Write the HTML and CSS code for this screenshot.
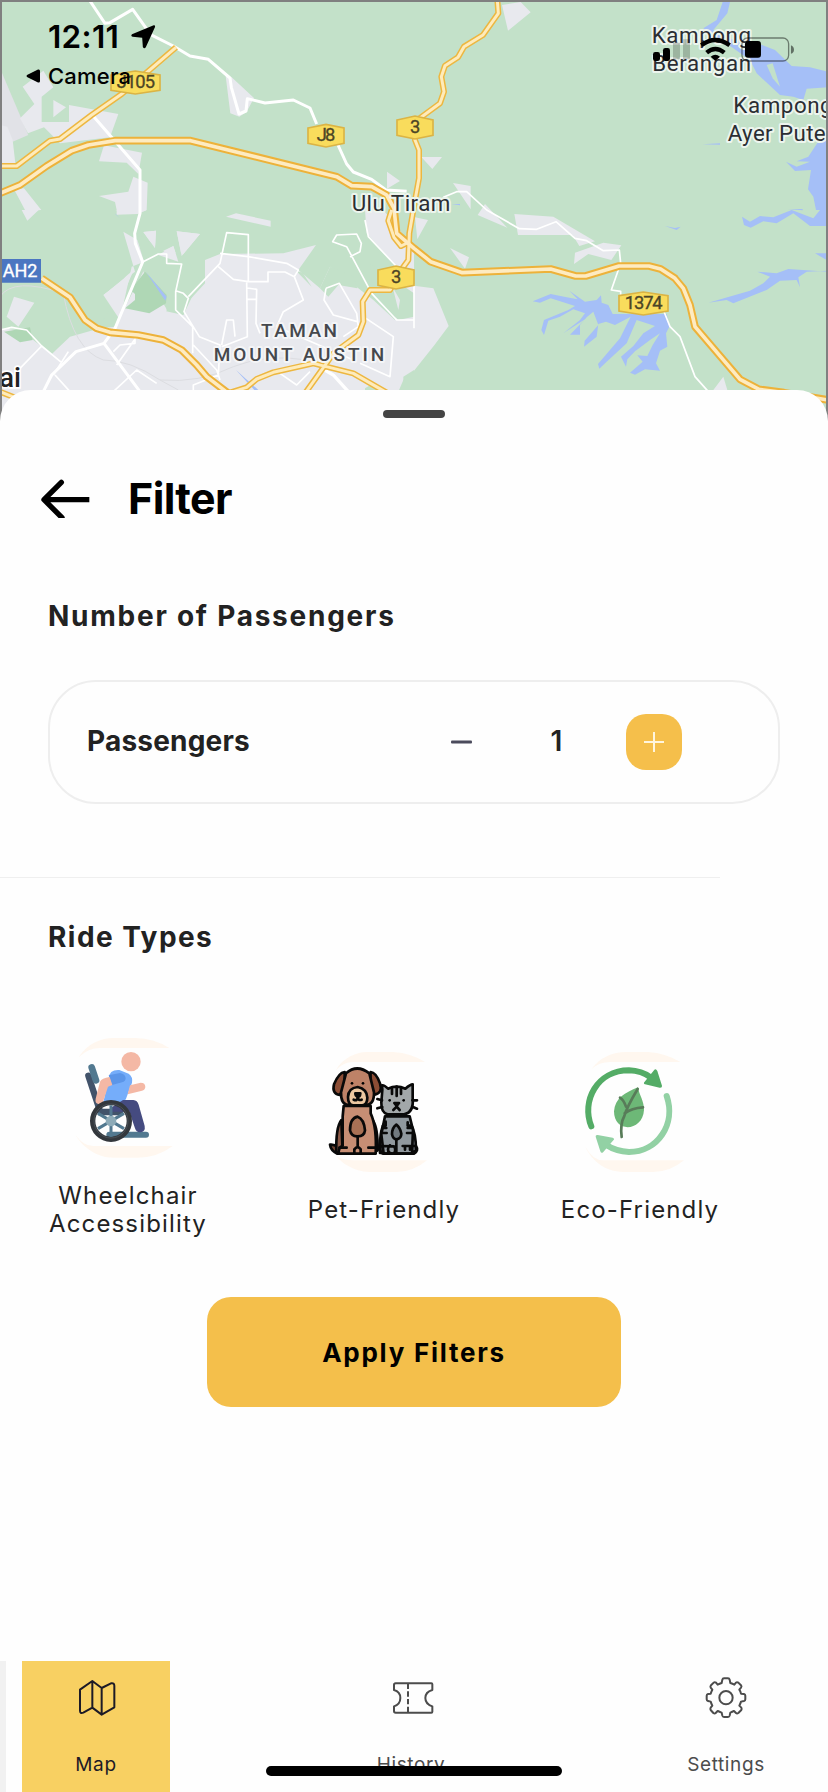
FILE: index.html
```html
<!DOCTYPE html>
<html lang="en">
<head>
<meta charset="utf-8">
<title>Filter</title>
<link rel="stylesheet" href="styles.css">
</head>
<body>
<div class="phone">
  <header class="map">
    <svg class="map-canvas" viewBox="0 0 2484 1290" width="828" height="430">
      <rect width="2484" height="1290" fill="#c3e1c9"/>
      <!-- built-up areas -->
      <g fill="#e8e9ee">
        <path fill="#e1e2e7" d="M0 205L85 405L38 425L0 375Z"/>
        <path d="M0 375L22 380L38 420L46 490L0 498Z"/>
        <path d="M68 260L130 212L160 262L125 290V366H207V315L355 342L330 412L180 430L132 382L84 400L60 355L103 312Z"/>
        <path d="M160 300L198 322L160 352ZM312 436L426 458L415 522L380 488L297 484ZM400 530L443 548L440 630H350L345 606L297 588L385 575ZM42 568L72 565L124 630H75Z"/>
        <path d="M677 228L695 232L762 294L740 335L718 350L691 340ZM1161 515L1200 543L1161 566Z"/>
        <path d="M1506 15L1562 6L1592 37L1524 92ZM1264 471H1326L1297 507ZM1359 549L1412 558V628ZM1433 645L1455 612L1522 683ZM1543 642L1660 650L1785 724L1738 738L1718 705H1554ZM1722 792L1725 758L1810 728L1864 736L1834 780L1765 762ZM1350 744L1407 772L1395 806ZM1245 652L1284 660L1252 718ZM1242 857L1300 865L1346 978L1304 1034L1242 1112Z"/>
        <path d="M65 630L120 632L82 662ZM350 630L440 630L412 642L350 644ZM678 650L708 640L812 662V680ZM370 695L412 720L432 785L410 775ZM430 696L468 692L465 745ZM530 694L600 702L545 768ZM470 762L520 738L535 785Z"/>
        <path d="M345 630L412 785L360 905L310 885L372 835L410 785L440 795L345 980L300 985L210 1010L155 1062L125 1035L60 990L0 985V1290H1210V1130L1242 1110V745L1150 630H1095L1100 700L1190 800L1205 880L1185 960L1120 900L1075 865L990 800L960 865L895 810L948 735L850 760L660 762L615 780V850L555 915L550 945L520 930L500 935L495 850L440 795Z"/>
        <path d="M42 890L103 908L55 980L20 950Z"/>
      </g>
      <path fill="#c3e1c9" d="M0 630H60L120 632H412V710L425 790L310 885L340 910L300 975L205 1010L155 1062L60 990L0 985ZM412 700L500 760H545L600 840L550 945L505 935L430 815ZM888 812L908 818L935 860ZM960 865L990 800L1060 830L1072 865L1015 855L985 890ZM1110 790L1242 880V950L1195 960L1120 885ZM1095 1165L1120 1150L1155 1180H1095ZM1210 1140L1242 1115V1175H1195Z"/>
      <path fill="#e8e9ee" d="M42 890L103 908L55 980L20 950ZM370 695L412 720L432 785L395 800L360 960L310 885L405 815ZM430 696L468 692L465 745ZM530 694L600 702L545 768ZM475 765L520 738L535 785ZM1178 862L1200 900L1195 930ZM2140 1170L2170 1130L2182 1170ZM65 630H116L82 662ZM350 630H440L412 642L350 644Z"/>
      <path fill="#afd7b5" d="M435 815L500 885L498 910L448 940L375 925L405 900V882L392 870ZM12 995L90 982L98 1020L60 1027Z"/>
      <!-- water -->
      <g fill="#a5bff7">
        <path d="M2168 6H2190L2182 40L2140 90L2180 115L2260 125L2325 150L2375 198L2430 202L2484 215V262L2420 266L2410 300L2380 290L2340 285L2270 220L2250 180L2200 145L2110 85L2150 60Z"/>
        <path d="M2484 380V630H2448L2440 590L2424 568L2433 510L2385 513L2358 485L2390 500L2430 485L2390 484L2425 470Z"/>
        <path d="M2484 600V678H2430L2380 640L2330 670L2290 664L2252 683L2232 675L2226 650L2250 665L2280 648L2320 652L2375 630L2440 655ZM2484 812L2420 815L2395 832L2400 862L2390 840L2340 842L2300 870L2200 910L2180 900L2125 908L2250 872L2290 850L2310 830L2272 815L2330 820L2365 807L2484 815ZM2445 760H2484V782ZM2108 433L2160 430V434ZM1995 678L2025 684L2042 680L2030 690ZM1355 612H1380V616ZM2364 627H2408V631Z"/>
        <path d="M1598 904L1652 882L1700 892L1733 898L1708 872L1755 905L1790 900L1803 886L1805 908L1825 915L1838 942H2000L2008 980L1998 1000L2002 1040L1980 1052L1968 1090L1980 1112L1935 1108L1905 1124L1890 1118L1928 1085L1912 1066L1942 1068L1958 1035L1980 1000L1950 1020L1905 1054L1882 1078L1878 1100L1863 1070L1900 1038L1930 1000L1965 978L1910 960L1880 1030L1820 1085L1798 1106L1794 1092L1860 1015L1892 950L1845 975L1818 965L1795 972L1790 1010L1752 1040L1754 1022L1795 975L1780 935L1760 952L1740 975V1004H1710L1755 958L1690 1000L1740 960L1755 940L1720 928L1680 950L1645 962L1632 1005L1624 990L1632 960L1705 930L1725 918L1652 895L1620 908Z"/>
        <path d="M438 816L500 890L496 902ZM345 640L360 655L348 644ZM708 1110L775 1170L765 1172Z"/>
      </g>
      <path fill="#c3e1c9" d="M2318 190L2340 260L2318 235L2300 195Z"/>
      <!-- minor roads -->
      <g fill="none" stroke="#dcdde1" stroke-width="3">
        <path d="M0 890Q40 830 190 880Q220 1050 310 1080Q390 1080 480 1140Q600 1150 700 1100Q800 1060 920 1080M480 1140L535 1170"/>
      </g>
      <g fill="none" stroke="#fff" stroke-linejoin="round" stroke-width="9">
        <path d="M268 0L315 70L330 68L398 28L452 104L520 138L570 168L625 178L690 234L694 262L717 342L738 333L742 296L795 309L880 300L930 324L950 372M1014 435L1040 492L1060 516L1115 538L1158 570L1220 574M277 345L420 510V640L404 700L406 730L428 786L345 985L312 1030L228 1055L155 1125L130 1175M312 1030L420 1175"/>
      </g>
      <g fill="none" stroke="#fff" stroke-linejoin="round" stroke-width="5">
        <path d="M428 786L475 762H500V790L545 792L527 875V930L578 980V1060M527 872L550 880L565 895L552 935L598 1010L660 1035L655 1125L580 1155V1175M565 890L660 790L680 698L745 704V845L700 838L655 800M660 760L745 770L860 790L895 810L883 830L910 900L850 935L830 980L1060 1080M745 845H804V816H855L883 830M740 845L742 1010L665 1040M742 864L770 868L768 970L780 1000M740 898H770M665 1035L680 960H700L705 1010M978 865L1018 850L1070 940L1075 980L1030 1010M978 865L972 900L1000 945L1072 965M1095 660L1105 710L1242 855V985M1040 740L1115 880L1190 960H1242M1040 740L998 725L1010 705L1070 702L1084 730L1080 755L1050 770M0 990L35 982L80 990L125 1038L185 1088M125 1038L60 1105M205 1055L160 1125M165 1125L210 1175M340 1055L360 1035L405 1030V1015M340 1175L410 1110L470 1150M410 1010L350 1095M580 1035L650 1110L660 1140M1090 950L1180 1010L1170 1130L1080 1090M840 1120L890 1155L930 1115M1380 1175M1330 592L1370 575H1400L1460 630L1558 686L1610 688L1668 665L1725 715L1760 722L1810 752L1858 750L1862 790L1834 870L1862 874V890M1990 930L2010 980L2040 1010L2085 1130L2125 1175"/>
      </g>
      <path d="M965 1105L1000 1125L1045 1175" fill="none" stroke="#fff" stroke-width="10"/>
      <!-- highways: casing, then fill -->
      <defs>
        <path id="minor-highways" d="M0 498H50L150 422L180 417L275 345L365 282L528 142M1492 0L1495 40L1449 105L1392 140L1374 172L1335 197L1324 230L1332 275L1320 310L1245 365V420L1257 450V535L1247 590L1228 700L1225 780L1205 808L1170 870H1110L1088 905L1090 965L1075 1005L1000 1060L965 1110L915 1180M1175 630L1165 662L1182 712L1203 738L1230 725M690 1178L740 1162L770 1137L820 1117L940 1090L1060 1120L1160 1178M0 1175L50 1195"/>
        <path id="major-highways" d="M0 580L60 555L140 498L215 452L265 435L345 422H572L1010 530L1055 557L1115 560L1160 585L1182 625L1190 700L1242 745L1292 785L1387 818L1652 807L1727 828H1757L1857 798H1947L1982 807L2025 835L2050 865L2070 915L2085 980L2220 1138L2277 1168L2352 1178L2484 1200M125 835L210 892L255 960L290 985L330 997L415 1005L490 1020L545 1050L590 1095L620 1130L685 1180"/>
      </defs>
      <g fill="none" stroke-linejoin="round">
        <use href="#minor-highways" stroke="#edb740" stroke-width="18"/>
        <use href="#major-highways" stroke="#edb23a" stroke-width="23"/>
        <use href="#minor-highways" stroke="#feebbb" stroke-width="9"/>
        <use href="#major-highways" stroke="#feebc1" stroke-width="11"/>
      </g>
      <!-- route shields -->
      <g fill="#f9dc5c" stroke="#dbb445" stroke-width="5">
        <path d="M333 225L406 213L480 225V271L406 282L333 271Z"/>
        <path d="M924 384L978 373L1032 384V430L978 441L924 430Z"/>
        <path d="M1191 360L1245 348L1299 360V406L1245 417L1191 406Z"/>
        <path d="M1134 810L1188 798L1242 810V856L1188 867L1134 856Z"/>
        <path d="M1857 887L1930 876L2004 887V933L1930 945L1857 933Z"/>
      </g>
      <path d="M0 777H123V848H0Z" fill="#4b76c1"/>
      <g class="shield-text">
        <text x="350" y="264" textLength="115">J105</text>
        <text x="950" y="423" textLength="56">J8</text>
        <text x="1230" y="400">3</text>
        <text x="1173" y="850">3</text>
        <text x="1874" y="927" textLength="114">1374</text>
        <text x="8" y="831" textLength="104" class="route-blue">AH2</text>
      </g>
      <!-- place names -->
      <g class="place">
        <text x="1955" y="128" textLength="298">Kampong</text>
        <text x="1957" y="214" textLength="296">Berangan</text>
        <text x="2200" y="338" textLength="298">Kampong</text>
        <text x="2183" y="424" textLength="294">Ayer Pute</text>
        <text x="1055" y="634" textLength="296">Ulu Tiram</text>
      </g>
      <g class="place district">
        <text x="783" y="1010" textLength="228">TAMAN</text>
        <text x="641" y="1082" textLength="512">MOUNT AUSTIN</text>
      </g>
      <text x="-2" y="1161" class="city">ai</text>
      <path d="M3 1290V3H2481V1290" fill="none" stroke="#808080" stroke-width="6"/>
    </svg>
    <div class="status">
      <div class="status-left">
        <div class="clock"><span>12:11</span>
          <svg viewBox="392 70 76 76" width="25" height="25"><path d="M461 74Q466 73 465 79L437 141Q432 147 428 140L426 112L397 109Q390 106 395 101Z"/></svg>
        </div>
        <div class="back-app">
          <svg viewBox="0 0 15 14" width="15" height="14"><path d="M1 6Q0 7 1 8L12 13.400Q14 14 14 12V2Q14 0 12 .6Z"/></svg>
          <span>Camera</span>
        </div>
      </div>
      <svg class="status-icons" viewBox="714 108 430 80" width="143.300" height="26.700">
        <rect x="717" y="156" width="21" height="27" rx="7"/>
        <rect x="747" y="144" width="21" height="39" rx="7"/>
        <path d="M777 128h21v50h-21ZM807 118h21v60h-21Z" opacity=".2"/>
        <g fill="none" stroke="#000" stroke-width="13"><path d="M862 136Q904 104 947 136M878 158Q904 136 931 158"/></g>
        <path d="M890 170Q904 158 918 170L904 183Z"/>
        <rect x="984" y="114" width="140" height="69" rx="17" fill="none" stroke="#000" stroke-opacity=".45" stroke-width="4"/>
        <rect x="993" y="123" width="48" height="50" rx="9"/>
        <path d="M1131 136Q1140 140 1140 149T1131 161Z" opacity=".5"/>
      </svg>
    </div>
  </header>

  <main class="sheet">
    <div class="handle"></div>
    <div class="title-row">
      <svg viewBox="122 115 147 117" width="49" height="39"><path d="M267 177H132M183 125L131 177L185 231" fill="none" stroke="#000" stroke-width="16" stroke-linejoin="round" stroke-linecap="round"/><path d="M267 165h6v24h-6Z" fill="#fff"/></svg>
      <h1>Filter</h1>
    </div>
    <h2 class="heading-passengers">Number of Passengers</h2>
    <section class="passenger-card">
      <span class="passenger-label">Passengers</span>
      <button class="minus" aria-label="Fewer"><svg viewBox="0 0 22 4" width="22" height="4"><rect y=".5" width="21" height="3" rx="1" fill="#4b4b5c"/></svg></button>
      <span class="count">1</span>
      <button class="plus" aria-label="More"><svg viewBox="0 0 20 20" width="20" height="20"><path d="M0 10H20M10 0V20" stroke="#fff5dd" stroke-width="2"/></svg></button>
    </section>
    <hr>
    <h2 class="heading-rides">Ride Types</h2>
    <section class="rides">
      <div class="ride">
        <svg viewBox="84 54 360 360" width="120" height="120">
          <path d="M116 112C142 70 184 54 220 54H285Q345 56 388 84H180Q145 84 116 112ZM106 344Q130 378 160 378H398Q352 413 293 413H220C170 413 127 380 106 344Z" fill="#fff7ef"/>
          <g fill="none" stroke-linecap="round">
            <path d="M208 344H318" stroke="#527990" stroke-width="18"/>
            <path d="M145 167L181 276H240" stroke="#42536a" stroke-width="19"/>
            <path d="M155 142L168 181" stroke="#527990" stroke-width="20"/>
          </g>
          <path d="M206 175Q208 148 238 150L266 161Q279 170 276 188L258 236Q254 248 236 247H190Z" fill="#75adfa"/>
          <path d="M206 166L240 159Q256 162 257 174Q257 184 246 187L216 195Z" fill="#5c96e9"/>
          <path d="M180 185Q185 174 209 171L217 195L204 200L191 240Q188 252 176 252Q164 250 167 236Z" fill="#f4b8a5"/>
          <path d="M270 196L302 188Q316 188 316 201Q315 211 303 213L263 223Z" fill="#f4b8a5"/>
          <circle cx="273" cy="125" r="29" fill="#f4b8a5"/>
          <path d="M213 263L249 240H280Q292 241 296 254L314 318Q317 335 301 337Q289 338 285 325L268 275H213Z" fill="#454b80"/>
          <circle cx="213" cy="303" r="55" fill="none" stroke="#33373c" stroke-width="16"/>
          <circle cx="213" cy="303" r="51" fill="none" stroke="#495057" stroke-width="3"/>
          <g stroke="#527990" stroke-width="9"><path d="M213 256V350M174 280L252 326M174 326L252 280"/></g>
          <circle cx="213" cy="303" r="16" fill="#8eabb8"/>
        </svg>
        <span>Wheelchair<br>Accessibility</span>
      </div>
      <div class="ride">
        <svg viewBox="102 66 360 360" width="120" height="120">
          <path d="M137 122C158 82 202 66 230 66H310Q365 70 405 96H190Q158 96 137 122ZM139 378Q160 391 190 391H411Q370 426 320 426H238C190 424 154 399 139 378Z" fill="#fff7ef"/>
          <g stroke="#090909" stroke-width="8" stroke-linejoin="round" stroke-linecap="round">
            <path d="M120 344Q146 342 153 371H142Q122 362 120 344Z" fill="#704433"/>
            <path d="M154 270Q137 292 139 367L158 371ZM249 272Q264 294 263 361L247 371Z" fill="#8c5947"/>
            <path d="M161 228H242V250Q261 291 257 371H146Q145 351 158 347V259Z" fill="#c78e74"/>
            <path d="M164 126Q146 128 132 163Q125 191 149 195L164 175ZM242 126Q258 127 270 160Q279 189 254 194L240 175Z" fill="#8c4d35"/>
            <path d="M153 187L168 130Q201 101 238 130L252 187Q253 225 227 225H176Q152 224 153 187Z" fill="#be8267"/>
            <path d="M174 201Q175 174 203 171Q231 177 232 203Q232 224 217 226H189Q174 224 174 201Z" fill="#ecc7a1"/>
            <path d="M203 260C187 263 180 281 180 301Q184 320 203 319Q223 319 225 301Q222 267 203 260Z" fill="#a97155"/>
            <path d="M203 320V350M148 353H170M235 353H257M193 369V358Q203 345 212 358V369M191 209Q203 214 203 201Q204 213 215 209" fill="none"/>
            <path d="M196 190H211Q210 202 203 200Q196 198 196 190Z" fill="#111"/>
          </g>
          <circle cx="186" cy="160" r="4"/><circle cx="219" cy="160" r="4"/>
          <g stroke="#090909" stroke-width="8" stroke-linejoin="round" stroke-linecap="round">
            <path d="M283 280Q268 303 270 369H300ZM360 277Q379 309 378 363L350 369Z" fill="#767e87"/>
            <path d="M285 259H359L369 300L366 371H281L274 313Z" fill="#90989e"/>
            <path d="M277 179L276 166Q282 164 294 176Q320 164 346 176Q361 163 368 163V204Q372 248 342 253H293Q273 248 274 217Z" fill="#a2a7a9"/>
            <path d="M319 284Q306 293 306 313Q309 328 320 328Q334 325 334 311Q330 292 319 284Z" fill="#71797f"/>
            <path d="M319 329V365M300 346Q294 350 294 358Q294 370 308 371H372Q387 361 378 348H338M272 348Q268 368 280 371H311Q320 361 312 349ZM287 275V287H279M353 277V287H361M278 294H289M353 294H364M277 309H290M351 309H366M345 348V359M360 348V359M306 177V192M320 170V198M333 177V192M262 207L276 211M262 235L277 231M367 211H381M367 230L381 236M310 240L320 230L329 240" fill="none"/>
            <path d="M313 219H327L320 228Z" fill="#111"/>
          </g>
          <circle cx="299" cy="211" r="4"/><circle cx="341" cy="211" r="4"/>
        </svg>
        <span>Pet-Friendly</span>
      </div>
      <div class="ride">
        <svg viewBox="120 66 360 360" width="120" height="120">
          <path d="M154 118C180 82 218 66 258 66H325Q378 70 421 96H212Q176 96 154 118ZM136 350Q159 391 190 391H432Q390 426 340 426H250C194 424 154 391 136 350Z" fill="#fff7ef"/>
          <g fill="none" stroke-linecap="round" stroke-width="18">
            <path d="M154 289C123 213 171 121 267 121Q305 122 333 143" stroke="#54ac66"/>
            <path d="M380 198C409 282 353 366 267 366Q228 364 199 345" stroke="#92d1a4"/>
          </g>
          <path d="M342 121Q347 114 352 123L366 167Q367 174 359 173L315 163Q309 160 314 155Z" fill="#54ac66"/>
          <path d="M167 320Q166 314 173 315L218 323Q225 326 220 331L190 366Q184 372 181 364Z" fill="#92d1a4"/>
          <path d="M294 172C298 197 312 211 312 240C308 305 222 311 222 244C225 205 255 188 294 172Z" fill="#6db877"/>
          <path d="M293 177Q260 232 253 258Q240 281 245 321M258 230Q251 210 240 203M254 250Q275 234 309 232" stroke="#587c59" stroke-width="8" fill="none" stroke-linecap="round"/>
        </svg>
        <span>Eco-Friendly</span>
      </div>
    </section>
    <button class="apply">Apply Filters</button>
  </main>

  <nav class="tabs">
    <a class="tab tab-map">
      <svg viewBox="234 116 114 114" width="38" height="38"><path d="M240 148L277 122L305 143L333 129Q343 127 343 136V201L305 223L277 202L250 217Q240 221 240 211ZM277 122V202M305 143V223" fill="none" stroke="#1d1a26" stroke-width="6" stroke-linejoin="round"/></svg>
      <span>Map</span>
    </a>
    <a class="tab tab-history">
      <svg viewBox="0 0 126 96" width="42" height="32"><path d="M11 4H118Q121 4 121 7V24Q100 30 100 48T121 73V89Q121 92 118 92H11Q6 92 6 87V73Q25 67 25 48T6 24V9Q6 4 11 4Z" fill="none" stroke="#4c4c4c" stroke-width="6" stroke-linejoin="round"/><path d="M48 5V91" stroke="#4c4c4c" stroke-width="6" stroke-dasharray="16 7"/></svg>
      <span>History</span>
    </a>
    <a class="tab tab-settings">
      <svg viewBox="873 110 126 124" width="42" height="41.300"><g fill="none" stroke="#4c4c4c" stroke-width="6" stroke-linejoin="round"><path d="M925 118Q926 114 930 114H942Q946 114 947 118L949 128Q956 130 961 133L966 127Q969 124 973 127L981 135Q984 138 981 142L976 148Q980 154 981 160L990 161Q994 162 994 166V177Q994 181 990 182L981 184Q979 191 976 196L982 202Q984 206 982 209L973 218Q969 221 966 218L960 212Q955 215 949 217L947 226Q946 230 942 230H930Q926 230 925 226L923 217Q916 215 911 212L905 218Q902 221 898 218L890 209Q888 206 890 202L895 196Q892 191 890 184L882 182Q878 181 878 177V166Q878 162 882 161L890 160Q892 153 895 148L890 142Q888 138 891 135L899 127Q902 124 906 127L911 133Q917 130 923 128Z"/><circle cx="936" cy="172" r="20"/></g></svg>
      <span>Settings</span>
    </a>
    <div class="home-indicator"></div>
  </nav>
</div>
</body>
</html>
```
FILE: styles.css
```css
* { box-sizing: border-box; }
body { margin: 0; background: #fefefe; font-family: Inter, "Liberation Sans", sans-serif; }
h1, h2, hr { margin: 0; }
button { border: 0; padding: 0; background: none; font-family: inherit; }
svg { display: block; flex: none; }

.phone { width: 828px; height: 1792px; display: flex; flex-direction: column; overflow: hidden; }

/* map */
.map { position: relative; height: 430px; flex: none; }
.map-canvas text { font-family: Roboto, sans-serif; }
.shield-text text { font-size: 55px; fill: #4c4526; stroke: #4c4526; stroke-width: 1; }
.shield-text .route-blue { fill: #fff; stroke: #fff; font-size: 54px; }
.place text { font-size: 67px; fill: #2b2e33; stroke: #edf5ee; stroke-width: 12; stroke-linejoin: round; paint-order: stroke; }
.district text { font-size: 57px; font-weight: 500; fill: #45484d; stroke: #f4f5f7; }
.map-canvas .city { font-size: 82px; font-weight: 500; fill: #222; stroke: #fff; stroke-width: 10; paint-order: stroke; }

/* status bar */
.status { position: absolute; inset: 0 0 auto 0; display: flex; justify-content: space-between; padding: 16px 33px 0 26px; }
.clock { display: flex; align-items: center; height: 40px; padding-left: 22px; gap: 9px; font-size: 31.5px; font-weight: 600; }
.clock span { width: 74px; letter-spacing: 0.3px; white-space: nowrap; }
.back-app { display: flex; align-items: center; height: 40px; gap: 7px; font-size: 22px; font-weight: 500; letter-spacing: 0.2px; }
.status-icons { margin-top: 20px; }

/* sheet */
.sheet { position: relative; margin-top: -40px; height: 1271px; flex: none; display: flex; flex-direction: column; align-items: flex-start; padding-top: 20px; border-radius: 31px 31px 0 0; background: #fefefe; }
.handle { width: 62px; height: 8px; align-self: center; border-radius: 4px; background: #444; }
.title-row { display: flex; align-items: center; height: 60px; margin: 50px 0 0 41px; gap: 38px; }
h1 { font-size: 43px; line-height: 60px; font-weight: 700; letter-spacing: -0.6px; }
h2 { padding-left: 48px; font-size: 28px; line-height: 40px; font-weight: 700; color: #222; }
.heading-passengers { margin-top: 68px; letter-spacing: 1.75px; }
.passenger-card { width: 732px; height: 124px; margin: 44px 0 0 48px; padding: 0 96px 0 37px; display: flex; align-items: center; border: 2px solid #eee; border-radius: 48px; }
.passenger-label { flex: 1; font-size: 28px; font-weight: 700; color: #222; letter-spacing: 0.2px; margin-top: -3px; }
.minus { width: 22px; }
.count { width: 153px; text-align: center; padding-left: 14px; font-size: 28px; font-weight: 600; color: #222; margin-top: -3px; }
.plus { width: 56px; height: 56px; display: grid; place-items: center; border-radius: 20px; background: #f5bf4b; }
hr { width: 720px; height: 1px; margin-top: 73px; border: 0; background: #efefef; }
.heading-rides { margin-top: 39px; letter-spacing: 1.45px; }
.rides { width: 768px; height: 200px; margin-top: 81px; display: grid; grid-template-columns: repeat(3, 256px); align-items: center; }
.ride { display: flex; flex-direction: column; align-items: center; gap: 24px; font-size: 24px; line-height: 28px; letter-spacing: 1.15px; text-align: center; color: #222; white-space: nowrap; }
.apply { width: 414px; height: 110px; margin-top: 59px; align-self: center; border-radius: 24px; background: #f4bf4b; color: #000; font-size: 26px; font-weight: 700; letter-spacing: 1.75px; }

/* tabs */
.tabs { position: relative; height: 131px; display: flex; justify-content: space-between; border-left: 6px solid #f1f1f1; padding: 0 28px 0 16px; }
.tab { width: 148px; display: flex; flex-direction: column; align-items: center; justify-content: space-between; padding-bottom: 12px; font-size: 19px; line-height: 30px; color: #4c4c4c; letter-spacing: 0.6px; }
.tab-map { padding-top: 18px; background: #f8d062; color: #1d1a26; }
.tab-map svg { margin-left: 2px; }
.tab-history { padding-top: 21px; }
.tab-history svg { margin-left: 4px; }
.tab-settings { padding-top: 16px; }
.home-indicator { position: absolute; left: 260px; top: 105px; width: 296px; height: 10px; border-radius: 5px; background: #000; }
```
